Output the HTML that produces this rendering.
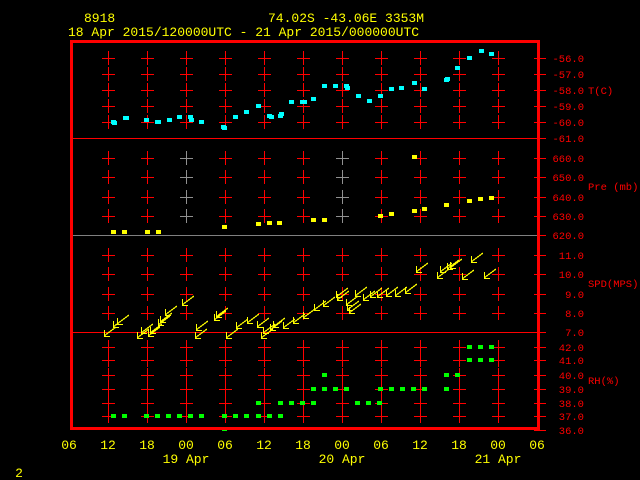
<!DOCTYPE html>
<html><head><meta charset="utf-8"><style>
html,body{margin:0;padding:0;background:#000;width:640px;height:480px;overflow:hidden}
svg{display:block}
line,rect{shape-rendering:crispEdges}
text{font-family:"Liberation Mono",monospace}
</style></head><body>
<svg id="s" width="640" height="480" xmlns="http://www.w3.org/2000/svg">
<g fill="#ffff00" font-size="13">
<text x="84" y="22">8918</text>
<text x="268" y="22">74.02S  -43.06E  3353M</text>
<text x="68" y="36">18 Apr 2015/120000UTC - 21 Apr 2015/000000UTC</text>
</g>
<g fill="#ffff00" font-size="13" text-anchor="middle">
<text x="69" y="449">06</text><text x="108" y="449">12</text><text x="147" y="449">18</text><text x="186" y="449">00</text>
<text x="225" y="449">06</text><text x="264" y="449">12</text><text x="303" y="449">18</text><text x="342" y="449">00</text>
<text x="381" y="449">06</text><text x="420" y="449">12</text><text x="459" y="449">18</text><text x="498" y="449">00</text><text x="537" y="449">06</text>
<text x="186" y="463">19 Apr</text><text x="342" y="463">20 Apr</text><text x="498" y="463">21 Apr</text>
<text x="19" y="477">2</text>
</g>
<g id="g"></g>
<rect x="71.5" y="41.5" width="467" height="387" fill="none" stroke="#ff0000" stroke-width="3"/>
</svg>
<script>
var g=document.getElementById('g'),h='';
function L(a,b,c,d,col,w){h+='<line x1="'+a+'" y1="'+b+'" x2="'+c+'" y2="'+d+'" stroke="'+col+'" stroke-width="'+(w||1)+'"/>';}
function T(x,y,s,col,anc){h+='<text x="'+x+'" y="'+y+'" fill="'+col+'" font-size="10.5" '+(anc?'text-anchor="end"':'')+'>'+s+'</text>';}
var cols=[108,147,186,225,264,303,342,381,420,459,498];
var rows=[[58,'-56.0'],[74,'-57.0'],[90,'-58.0'],[106,'-59.0'],[122,'-60.0'],[138,'-61.0'],
[158,'660.0'],[177,'650.0'],[197,'640.0'],[216,'630.0'],[235,'620.0'],
[255,'11.0'],[274,'10.0'],[294,'9.0'],[313,'8.0'],[332,'7.0'],
[347,'42.0'],[360,'41.0'],[375,'40.0'],[389,'39.0'],[403,'38.0'],[416,'37.0'],[430,'36.0']];
var skip={138:1,235:1,332:1,430:1};
rows.forEach(function(r){var y=r[0];
 if(!skip[y]) cols.forEach(function(x){var c=(y>140&&y<240&&(x==186||x==342))?'#909090':'#ff0000';L(x-6,y+.5,x+7,y+.5,c);L(x+.5,y-7,x+.5,y+7,c);});
 L(534,y+.5,546,y+.5,'#ff0000');
 T(584,y+4,r[1],'#ff0000',1);});
L(72,138.5,546,138.5,'#ff0000',1);L(72,235.5,537,235.5,'#808080');L(72,332.5,546,332.5,'#ff0000',1);
T(588,94,'T(C)','#ff0000');T(588,190,'Pre (mb)','#ff0000');T(588,287,'SPD(MPS)','#ff0000');T(588,384,'RH(%)','#ff0000');
function P(list,col){list.forEach(function(p){h+='<rect x="'+(p[0]-2)+'" y="'+(p[1]-2)+'" width="5" height="4" fill="'+col+'"/>';});}
P([[113,122],[114,123],[125,118],[126,118],[146,120],[157,122],[158,122],[169,120],[179,117],[190,117],[191,120],[201,122],[223,127],[224,128],[235,117],[246,112],[258,106],[269,116],[271,117],[280,116],[281,114],[291,102],[302,102],[304,102],[313,99],[324,86],[335,86],[346,86],[347,88],[358,96],[369,101],[380,96],[391,89],[401,88],[414,83],[424,89],[446,80],[447,79],[457,68],[469,58],[481,51],[491,54]],'#00ffff');
P([[113,232],[124,232],[147,232],[158,232],[224,227],[258,224],[269,223],[279,223],[313,220],[324,220],[380,216],[391,214],[414,157],[414,211],[424,209],[446,205],[469,201],[480,199],[491,198]],'#ffff00');
var gr=[];[113,124,146,157,168,179,190,201,224,235,246,258,269,280].forEach(function(x){gr.push([x,416]);});
[258,280,291,302,313,357,368,379].forEach(function(x){gr.push([x,403]);});
[313,324,335,346,380,391,402,413,424,446].forEach(function(x){gr.push([x,389]);});
[[324,375],[446,375],[457,375],[224,429],[469,347],[480,347],[491,347],[469,360],[480,360],[491,360]].forEach(function(p){gr.push(p);});
P(gr,'#00ff00');
[[104,336],[113,327],[117,324],[137,338],[141,333],[148,336],[150,333],[158,325],[160,322],[165,315],[182,305],[195,338],[196,330],[214,320],[216,317],[226,338],[236,328],[247,323],[257,327],[261,338],[263,333],[270,330],[273,327],[283,328],[293,323],[303,318],[314,310],[323,306],[336,297],[337,300],[346,305],[347,310],[349,313],[355,296],[363,300],[370,297],[377,297],[386,296],[395,296],[405,293],[416,272],[437,278],[440,272],[447,269],[450,268],[462,279],[471,262],[484,278]].forEach(function(a){var x=a[0],y=a[1];
 h+='<line x1="'+x+'" y1="'+y+'" x2="'+(x+12)+'" y2="'+(y-9)+'" stroke="#ffff00" stroke-width="1.2"/>';
 L(x,y+.5,x+6,y+.5,'#ffff00');L(x+.5,y,x+.5,y-6,'#ffff00');});
g.innerHTML=h;
</script>
</body></html>
